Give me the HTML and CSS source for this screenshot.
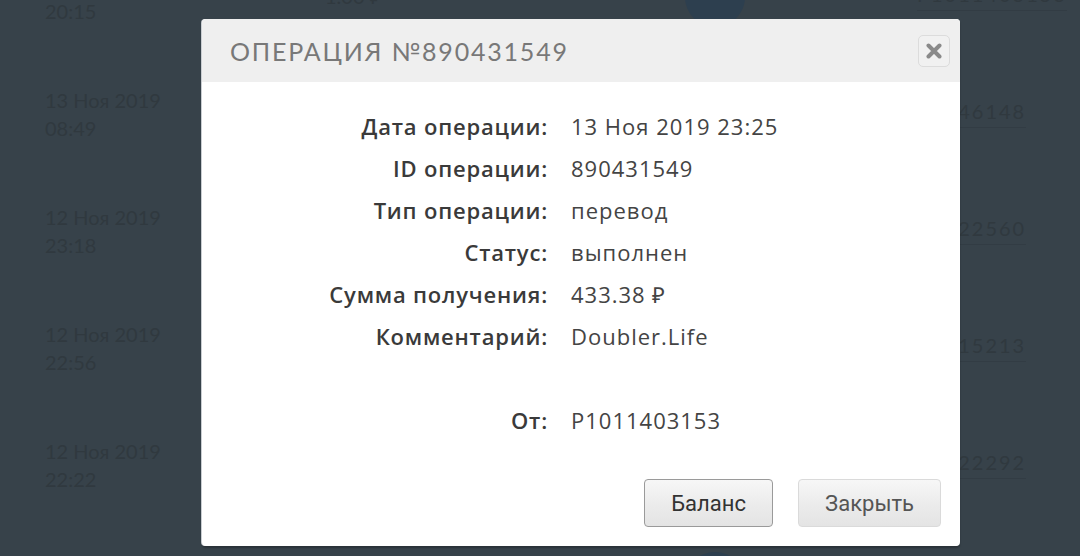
FILE: index.html
```html
<!DOCTYPE html>
<html lang="ru">
<head>
    <meta charset="UTF-8">
    <meta name="viewport" content="width=device-width, initial-scale=1.0">
    <title>Операция №890431549</title>
    <link rel="stylesheet" href="styles.css">
</head>
<body>

<div class="page">
    <div class="history">
        <div class="row">
            <div class="date">12 Ноя 2019<br>20:15</div>
            <div class="amount">1.00 ₽</div>
            <div class="icon"></div>
            <div class="num">P1011403153</div>
        </div>
        <div class="row">
            <div class="date">13 Ноя 2019<br>08:49</div>
            <div class="amount">5.00 ₽</div>
            <div class="icon"></div>
            <div class="num">P1046148</div>
        </div>
        <div class="row">
            <div class="date">12 Ноя 2019<br>23:18</div>
            <div class="amount">3.00 ₽</div>
            <div class="icon"></div>
            <div class="num">P1022560</div>
        </div>
        <div class="row">
            <div class="date">12 Ноя 2019<br>22:56</div>
            <div class="amount">2.00 ₽</div>
            <div class="icon"></div>
            <div class="num">P1015213</div>
        </div>
        <div class="row">
            <div class="date">12 Ноя 2019<br>22:22</div>
            <div class="amount">4.00 ₽</div>
            <div class="icon"></div>
            <div class="num">P1022292</div>
        </div>
        <div class="row">
            <div class="date">12 Ноя 2019<br>21:40</div>
            <div class="amount">1.00 ₽</div>
            <div class="icon"></div>
            <div class="num">P1019011</div>
        </div>
    </div>

    <div class="modal">
        <div class="modalHeader">
            <h2>Операция №890431549</h2>
            <button class="closeX" aria-label="Закрыть">
                <svg width="16" height="16" viewBox="0 0 16 16">
                    <path d="M2.5 2.5 L13.5 13.5 M13.5 2.5 L2.5 13.5" stroke="#8a8a8a" stroke-width="4" stroke-linecap="round"/>
                </svg>
            </button>
        </div>
        <div class="modalBody">
            <div class="info">
                <div class="label">Дата операции:</div>
                <div class="value">13 Ноя 2019 23:25</div>

                <div class="label">ID операции:</div>
                <div class="value">890431549</div>

                <div class="label">Тип операции:</div>
                <div class="value">перевод</div>

                <div class="label">Статус:</div>
                <div class="value">выполнен</div>

                <div class="label">Сумма получения:</div>
                <div class="value">433.38 ₽</div>

                <div class="label">Комментарий:</div>
                <div class="value">Doubler.Life</div>

                <div class="label spacer"></div>
                <div class="value spacer"></div>

                <div class="label">От:</div>
                <div class="value">P1011403153</div>
            </div>
            <div class="actions">
                <button class="btn btnDark">Баланс</button>
                <button class="btn">Закрыть</button>
            </div>
        </div>
    </div>
</div>

</body>
</html>
```

FILE: styles.css
```css
html, body {
    margin: 0;
    padding: 0;
    height: 100%;
    overflow: hidden;
}

body {
    font-family: 'Open Sans', sans-serif;
    background-color: #37424a;
}

.page {
    position: relative;
    height: 556px;
    overflow: hidden;
}

.history {
    margin-top: -62px;
}

.row {
    display: flex;
    align-items: center;
    height: 117px;
    color: #30393f;
    font-family: 'Lato', sans-serif;
    font-size: 20px;
}

.row .date {
    width: 280px;
    padding-left: 45px;
    line-height: 28px;
}

.row .amount {
    width: 360px;
}

.row .icon {
    width: 60px;
    height: 60px;
    border-radius: 50%;
    background-color: #2d3f4f;
    margin-right: 172px;
}

.row .num {
    letter-spacing: 2px;
    padding-bottom: 4px;
    border-bottom: 1px solid #323c44;
}

.modal {
    position: absolute;
    left: 202px;
    top: 19px;
    width: 758px;
    height: 527px;
    background-color: #fff;
    border-radius: 4px;
    box-shadow: -1px 0 0 #c9cdd1, 0 2px 2px rgba(0, 0, 0, 0.25);
    display: flex;
    flex-direction: column;
    overflow: hidden;
}

.modalHeader {
    height: 63px;
    background-color: #efefef;
    display: flex;
    align-items: center;
    justify-content: space-between;
    padding: 0 10px 0 28px;
}

.modalHeader h2 {
    margin: 0;
    font-family: 'Lato', sans-serif;
    font-weight: 400;
    font-size: 25px;
    letter-spacing: 1.8px;
    text-transform: uppercase;
    color: #787878;
}

.closeX {
    width: 32px;
    height: 32px;
    border: 1px solid #dcdcdc;
    border-radius: 5px;
    background-color: #f1f1f1;
    padding: 0;
    display: flex;
    align-items: center;
    justify-content: center;
    cursor: pointer;
}

.modalBody {
    flex: 1;
    display: flex;
    flex-direction: column;
    justify-content: space-between;
    padding: 23px 19px 19px 0;
}

.info {
    display: grid;
    grid-template-columns: 346px auto;
    column-gap: 23px;
    font-size: 22px;
    line-height: 42px;
}

.info .label {
    text-align: right;
    color: #3a3a3a;
    font-weight: 600;
    letter-spacing: 0.8px;
}

.info .value {
    color: #444;
    letter-spacing: 1px;
}

.info .spacer {
    height: 42px;
}

.actions {
    display: flex;
    justify-content: flex-end;
    gap: 25px;
}

.btn {
    font-family: 'Roboto', sans-serif;
    font-size: 22px;
    color: #555;
    height: 48px;
    padding: 0 26px;
    border: 1px solid #dadada;
    border-radius: 4px;
    background: linear-gradient(#f7f7f7, #ececec 50%, #e4e4e4);
    cursor: pointer;
}

.btnDark {
    color: #333;
    border-color: #9a9a9a;
    width: 129px;
}
```
